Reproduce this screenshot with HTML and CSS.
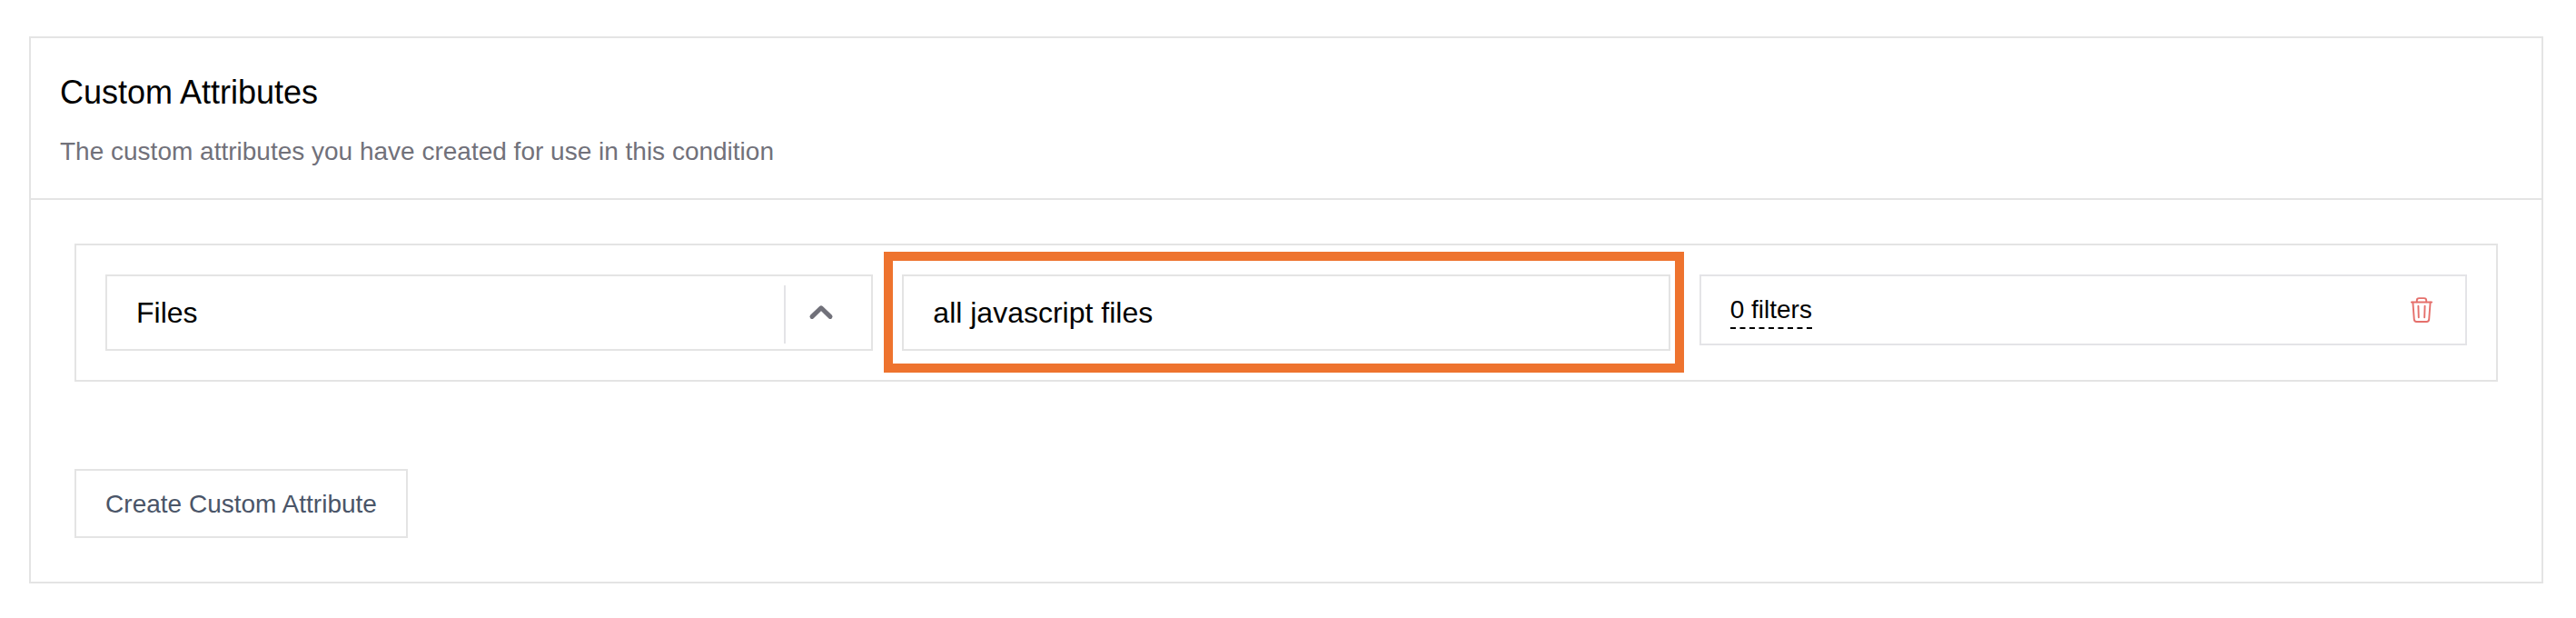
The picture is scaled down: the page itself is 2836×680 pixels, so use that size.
FILE: index.html
```html
<!DOCTYPE html>
<html lang="en">
<head>
<meta charset="utf-8">
<title>Custom Attributes</title>
<link rel="stylesheet" href="styles.css">
</head>
<body>
<section class="card">
  <header class="card-header">
    <h2 class="card-title"><span class="title-text">Custom Attributes</span></h2>
    <p class="card-subtitle"><span class="subtitle-text">The custom attributes you have created for use in this condition</span></p>
  </header>
  <div class="card-body">
    <div class="attribute-row">
      <div class="field select">
        <span class="select-value">Files</span>
        <span class="select-toggle">
          <svg class="chevron" viewBox="0 0 28 18"><path d="M4 13.4 14 3.8 24 13.4"/></svg>
        </span>
      </div>
      <div class="highlighted">
        <div class="field name-input"><span class="name-text">all javascript files</span></div>
        <div class="highlight"></div>
      </div>
      <div class="field filters">
        <span class="filters-link">0 filters</span>
        <svg class="trash" viewBox="0 0 24 28">
          <path d="M0.8 5.5H23.2"/>
          <path d="M6.8 5.2V3.6Q6.8 1.1 9.2 1.1H14.8Q17.2 1.1 17.2 3.6V5.2"/>
          <path d="M2.4 5.8 3.8 24.4Q4 27 6.4 27H17.6Q20 27 20.2 24.4L21.6 5.8"/>
          <path d="M8.4 9.8 8.8 22.2M15.6 9.8 15.2 22.2"/>
        </svg>
      </div>
    </div>
    <button class="create-button" type="button"><span class="button-text">Create Custom Attribute</span></button>
  </div>
</section>
</body>
</html>
```
FILE: styles.css
```css
* { box-sizing: border-box; }
body {
  margin: 0;
  padding: 40px 36px 0 32px;
  background: #fff;
  color: #000;
  font-family: "Liberation Sans", Arial, sans-serif;
}
.card { border: 2px solid #e4e4e4; height: 602px; }
.card-header {
  height: 178px;
  padding: 32px;
  border-bottom: 2px solid #e4e4e4;
}
.card-title { margin: 0; font-size: 36px; line-height: 56px; font-weight: 400; }
.card-subtitle { margin: 17px 0 0; font-size: 28px; line-height: 40px; color: #71717a; }
.card-body {
  display: flex;
  flex-direction: column;
  align-items: flex-start;
  gap: 96px;
  padding: 48px;
}
.attribute-row {
  display: grid;
  grid-template-columns: repeat(3, 1fr);
  align-items: start;
  gap: 32px;
  width: 100%;
  padding: 32px;
  border: 2px solid #e4e4e4;
}
.field {
  display: flex;
  align-items: center;
  height: 84px;
  border: 2px solid #e4e4e4;
  padding-left: 32px;
  font-size: 32px;
}
.select { justify-content: space-between; }
.select-toggle {
  display: flex;
  align-items: center;
  height: 64px;
  width: 96px;
  margin-top: 4px;
  padding-left: 25px;
  border-left: 2px solid #e4e4e7;
}
.chevron { width: 28px; height: 18px; margin-bottom: 4px; fill: none; stroke: #71717a; stroke-width: 5; stroke-linecap: round; stroke-linejoin: round; }
.highlighted { position: relative; }
.highlight {
  position: absolute;
  top: -25px;
  left: -20px;
  width: 881px;
  height: 133px;
  border: 10px solid #ee732e;
}
.filters {
  height: 78px;
  justify-content: space-between;
  padding: 0 36px 0 32px;
  border-color: #e4e4e7;
  font-size: 28px;
}
.filters-link {
  height: 40px;
  line-height: 38px;
  margin-top: 2px;
  border-bottom: 2px dashed #000;
}
.trash { width: 24px; height: 28px; fill: none; stroke: #e5706c; stroke-width: 1.9; stroke-linecap: round; stroke-linejoin: round; }
.create-button {
  height: 76px;
  width: 367px;
  padding: 2px 0 0;
  border: 2px solid #e4e4e4;
  background: #fff;
  color: #4a5568;
  font: 28px "Liberation Sans", Arial, sans-serif;
}
```
